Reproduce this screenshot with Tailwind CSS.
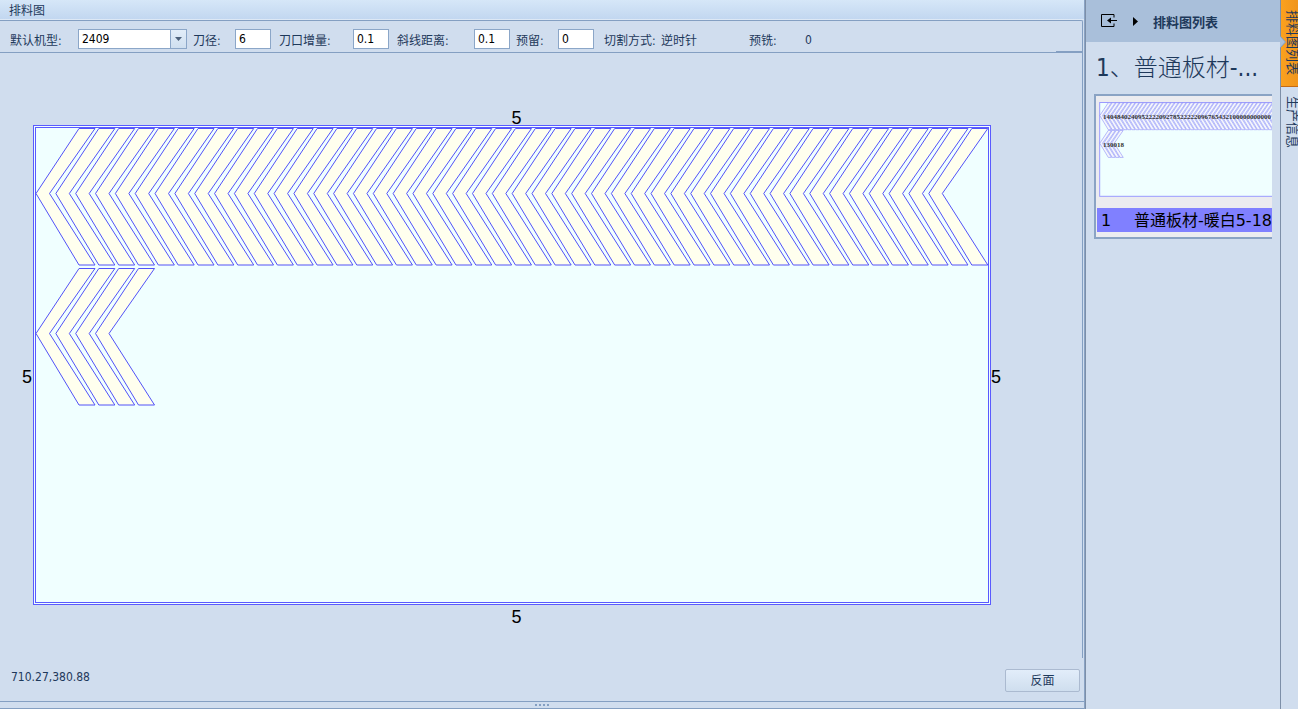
<!DOCTYPE html>
<html lang="zh-CN">

<head>
  <meta charset="UTF-8">
  <meta name="viewport" content="width=device-width, initial-scale=1.0">
  <title>排料图</title>
  <script src="https://cdn.jsdelivr.net/npm/@tailwindcss/browser@4"></script>
</head>

<body class="h-screen flex overflow-hidden bg-[#d0ddee] text-[#1e395b] text-[12px] leading-4 whitespace-nowrap font-['DejaVu_Sans_Condensed','Noto_Sans_CJK_SC',sans-serif]">

  <main class="flex-1 min-w-0 flex flex-col border-r border-[#8aa3c4]">
    <h1 class="h-5 pl-[9px] pt-[3px] shrink-0 bg-linear-to-b from-[#d6e7f8] to-[#c2d7f0] border-b border-[#dde8f5]">排料图</h1>

    <div class="flex-1 min-h-0 flex flex-col mr-px border-t border-r border-[#849fc2] rounded-tr-xs">
      <form class="relative h-8 shrink-0 flex items-center pl-[10px] pt-1 border-b border-[#849fc2]">
        <label for="machine" class="w-[68px] pt-1">默认机型:</label>
        <div class="relative w-[109px] h-5">
          <select id="machine" class="appearance-none w-full h-5 pl-[3px] bg-white border border-[#8ba6c8] text-black">
            <option>2409</option>
          </select>
          <span class="absolute top-px right-px bottom-px w-4 flex items-center justify-center bg-linear-to-b from-[#e2edf9] to-[#cfdff0] border-l border-[#8ba6c8] pointer-events-none">
            <svg class="w-[7px] h-1" viewBox="0 0 7 4"><path d="M0 0h7L3.500 4z" fill="#4c607a" /></svg>
          </span>
        </div>
        <label for="diameter" class="w-12 pl-[6px] pt-1">刀径:</label>
        <input id="diameter" type="text" value="6" class="w-9 h-5 pl-[3px] bg-white border border-[#8ba6c8] text-black">
        <label for="increment" class="w-[82px] pl-2 pt-1">刀口增量:</label>
        <input id="increment" type="text" value="0.1" class="w-9 h-5 pl-[3px] bg-white border border-[#8ba6c8] text-black">
        <label for="distance" class="w-[85px] pl-2 pt-1">斜线距离:</label>
        <input id="distance" type="text" value="0.1" class="w-9 h-5 pl-[3px] bg-white border border-[#8ba6c8] text-black">
        <label for="reserve" class="w-12 pl-[6px] pt-1">预留:</label>
        <input id="reserve" type="text" value="0" class="w-9 h-5 pl-[3px] bg-white border border-[#8ba6c8] text-black">
        <span class="w-[67px] pl-[10px] pt-1">切割方式:</span>
        <span class="w-[88px] pt-1">逆时针</span>
        <span class="w-14 pt-1">预铣:</span>
        <span class="pt-[2px]">0</span>
        <span class="absolute right-0 bottom-0 w-[26px] h-px bg-[#849fc2]"></span>
      </form>

      <!-- board with its margins on all four sides -->
      <section class="flex-1 min-h-0 pt-12 grid grid-cols-[33px_1fr_91px] content-start text-[18px] leading-6 text-black font-['Liberation_Sans',sans-serif]">
        <span class="col-span-3 pt-[5px] pl-[33px] pr-[82px] h-6 text-center">5</span>
        <span class="self-center pt-6 pr-px text-right">5</span>
        <svg class="w-full h-auto" viewBox="0 0 958 480">
          <defs>
            <path id="parts" />
          </defs>
          <rect x=".5" y=".5" width="957" height="479" fill="#f0ffff" stroke="#5a5aff" />
          <rect x="2.500" y="2.500" width="953" height="475" fill="#f0ffff" stroke="#5a5aff" />
          <use href="#parts" fill="#ffffee" stroke="#5252f8" />
        </svg>
        <span class="self-center pt-6">5</span>
        <span class="col-span-3 pl-[33px] pr-[82px] text-center">5</span>
      </section>
    </div>

    <div class="h-11 shrink-0 flex items-start justify-between pl-[11px] pr-1 pt-[11px] border-b border-[#849fc2]">
      <output>710.27,380.88</output>
      <button type="button" class="w-[75px] h-[23px] pt-px rounded-xs border border-[#abbad0] bg-linear-to-b from-[#e2edfa] to-[#cfdeee]">反面</button>
    </div>
    <div class="h-[7px] shrink-0 flex items-center justify-center gap-[2px] border-b border-[#849fc2]">
      <i class="size-[2px] bg-[#849fc2]"></i>
      <i class="size-[2px] bg-[#849fc2]"></i>
      <i class="size-[2px] bg-[#849fc2]"></i>
      <i class="size-[2px] bg-[#849fc2]"></i>
    </div>
  </main>

  <aside class="w-[195px] shrink-0 border-l border-[#7d8fa8]">
    <header class="h-[42px] flex items-center pl-[15px] bg-[#a9bfda]">
      <svg class="w-4 h-[14px]" viewBox="0 0 16 14" fill="none" stroke="#000">
        <path d="M13 3.500V.5H.5v12H13V9.500M7 6.500h9" />
        <path d="M6 6.500l4-3v6z" fill="#000" stroke="none" />
      </svg>
      <svg class="w-[5px] h-[9px] ml-4 mr-[15px]" viewBox="0 0 5 9"><path d="M0 0l5 4.500L0 9z" /></svg>
      <h2 class="pt-[3px] text-[13px] font-bold">排料图列表</h2>
    </header>
    <h3 class="pl-[10px] pt-[10px] text-[24px] leading-8 font-light">1、普通板材-...</h3>

    <!-- preview, cut off at the right -->
    <div class="mt-[10px] ml-2 mr-2 h-[145px] overflow-hidden border-y-2 border-l-2 border-[#8aa3c4] bg-[#ececf0] text-black">
      <div class="relative ml-[3px] mt-[6px] w-[190px]">
        <svg class="w-[190px] h-[95px] block" viewBox="0 0 958 480">
          <rect x="2.500" y="2.500" width="953" height="474" fill="#f0ffff" stroke="#9a9aff" stroke-width="5" />
          <use href="#parts" fill="#f4f6fc" stroke="#8c8cf8" stroke-width="3" />
        </svg>
        <span class="absolute left-1 top-[10px] text-[7px] leading-[10px] font-bold text-[#333] font-['Liberation_Serif',serif]">140484024095222209278522222096765432100000000000</span>
        <span class="absolute left-1 top-[38px] text-[7px] leading-[10px] font-bold text-[#333] font-['Liberation_Serif',serif]">130018</span>
      </div>
      <div class="ml-px mt-[11px] h-6 pt-[2px] flex items-center bg-[#8080ff] text-[16px] font-['DejaVu_Sans','Noto_Sans_CJK_SC',sans-serif]">
        <span class="w-[38px] pl-1">1</span>
        <span>普通板材-暖白5-18</span>
      </div>
    </div>
  </aside>

  <nav class="relative w-[18px] shrink-0 border-l border-[#7d8fa8]">
    <svg class="absolute -left-px top-9 w-[6px] h-3 z-10" viewBox="0 0 6 12"><path d="M0 0l5.500 6L0 12" fill="#a9bfda" stroke="#7d9cc4" /></svg>
    <button type="button" class="block w-full h-[87px] pl-[5px] bg-linear-to-r from-[#fba11e] to-[#f0951c] border-b border-[#c46a14] text-left">
      <span class="block w-[12px] text-[13px] leading-[12px] [writing-mode:vertical-rl] [text-orientation:sideways]">排料图列表</span>
    </button>
    <button type="button" class="block w-full pt-[9px] pl-[5px] text-left">
      <span class="block w-[12px] text-[13px] leading-[12px] [writing-mode:vertical-rl] [text-orientation:sideways]">生产信息</span>
    </button>
  </nav>

  <script>
    const rows = [{ y: 3, count: 46 }, { y: 143, count: 4 }];
    const step = 19.84;

    function drawParts() {
      let d = "";
      rows.forEach(row => {
        for (let i = 0; i < row.count; i++) {
          const x = 2.5 + i * step;
          d += `M${x + 43.5} ${row.y + 0.5}h16l-45.500 65l45.500 71.500h-16L${x + 0.5} ${row.y + 65.5}z`;
        }
      });
      document.getElementById("parts").setAttribute("d", d);
    }

    drawParts();
  </script>
</body>

</html>
